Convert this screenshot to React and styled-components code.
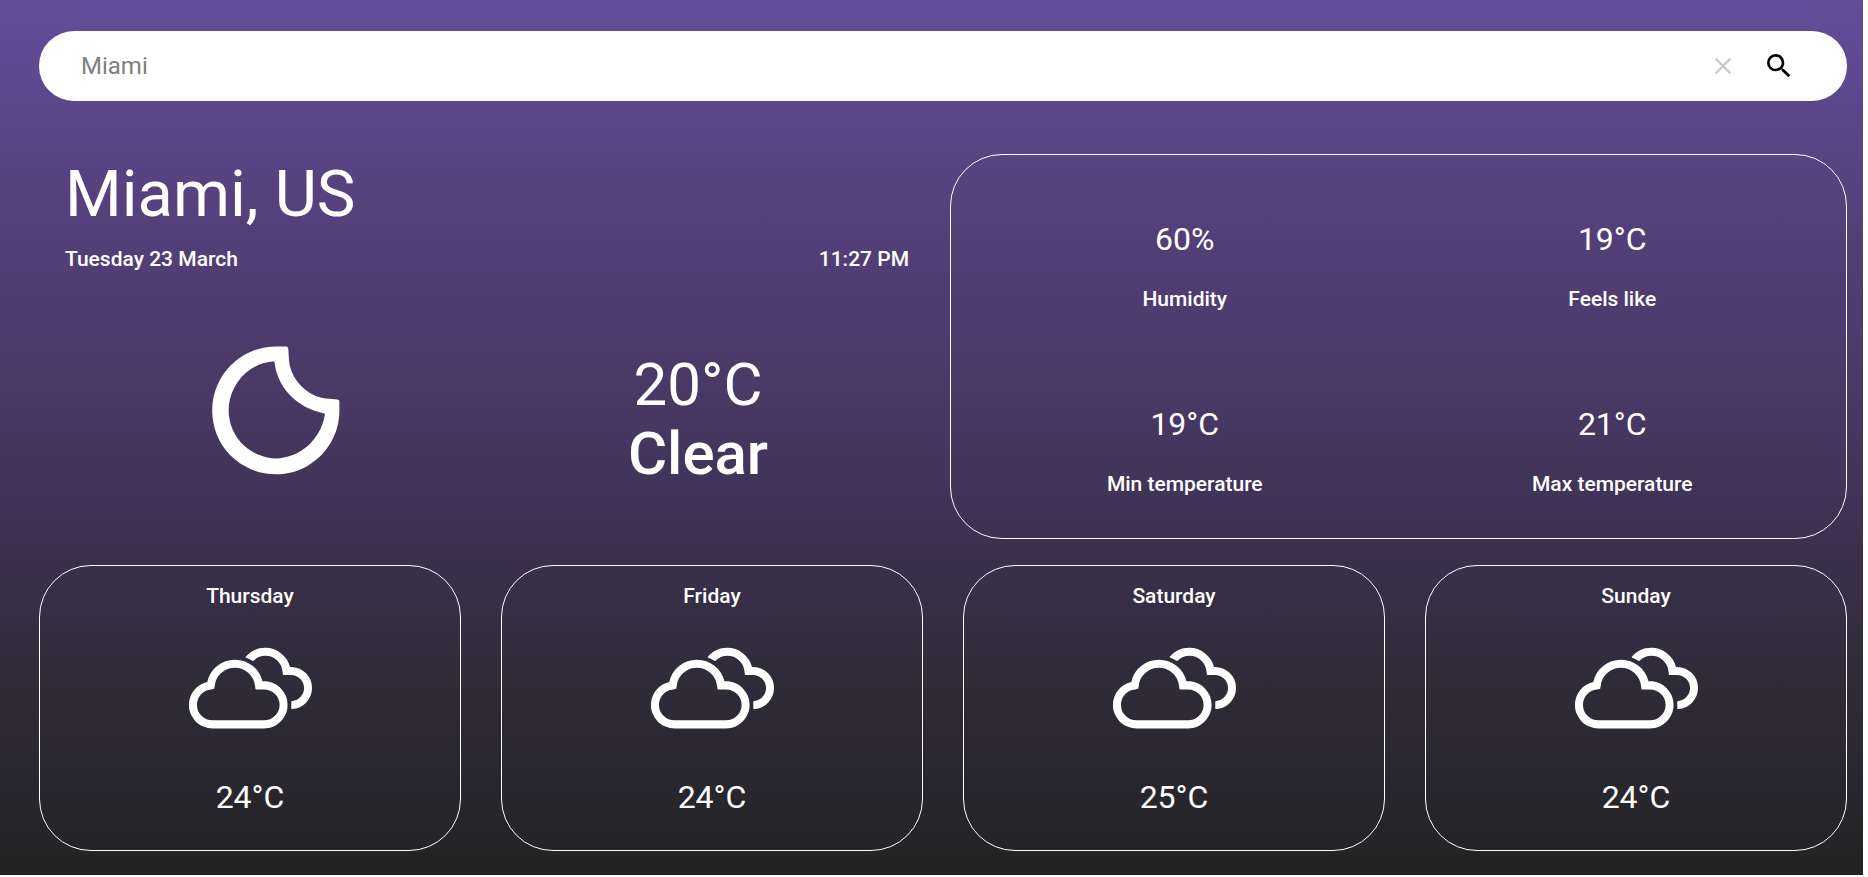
import React, { useState } from "react";
import styled, { createGlobalStyle } from "styled-components";
import { MdClose, MdSearch } from "react-icons/md";
import { WiCloudy, WiNightClear } from "react-icons/wi";

const GlobalStyle = createGlobalStyle`
  *, *::before, *::after { box-sizing: border-box; }
  body { margin: 0; background: #fff; font-family: Roboto, sans-serif; }
  h1, h2, p, dl, dt, dd, ul { margin: 0; padding: 0; font-weight: 400; }
`;

const Page = styled.main`
  display: flex;
  flex-direction: column;
  min-height: calc(100vh - 2px);
  margin: 0 5px 2px 0;
  padding: 31px 16px 24px 39px;
  color: #fff;
  background: linear-gradient(#644d9b, #54407a 25%, #463862 48%, #3a304c 64%, #2f2b39 78%, #232323);
`;

const SearchBar = styled.form`
  display: flex;
  align-items: center;
  height: 70px;
  padding: 0 40px 0 42px;
  border-radius: 35px;
  background: #fff;
`;

const SearchInput = styled.input`
  flex: 1;
  min-width: 0;
  border: 0;
  outline: 0;
  padding: 0;
  background: transparent;
  font: 400 24px Roboto, sans-serif;
  color: #000;
  &::placeholder { color: #808080; opacity: 1; }
`;

const IconButton = styled.button`
  display: flex;
  align-items: center;
  justify-content: center;
  width: 56px;
  height: 48px;
  padding: 0;
  border: 0;
  background: transparent;
  color: ${(p) => p.$color};
  font-size: ${(p) => p.$size}px;
`;

const Overview = styled.div`
  display: grid;
  grid-template-columns: 1fr 1fr;
  gap: 14px;
  margin-top: 53px;
`;

const Current = styled.section`
  display: flex;
  flex-direction: column;
  padding: 0 27px 0 26px;
`;

const City = styled.h1`
  font-size: 65px;
  line-height: 80px;
`;

const DateRow = styled.div`
  display: flex;
  justify-content: space-between;
  margin-top: 13px;
`;

const Label = styled.span`
  display: block;
  font-size: 21px;
  line-height: 24px;
  font-weight: 500;
`;

const Conditions = styled.div`
  display: grid;
  grid-template-columns: 1fr 1fr;
  align-items: center;
  justify-items: center;
  flex: 1;
  padding-top: 20px;
`;

const Reading = styled.div`
  display: flex;
  flex-direction: column;
  align-items: center;
  padding-top: 8px;
  font-size: 60px;
  line-height: 69px;
`;

const Summary = styled.strong`
  font-weight: 500;
`;

const Details = styled.dl`
  display: grid;
  grid-template-columns: 1fr 1fr;
  align-content: start;
  row-gap: 94px;
  min-height: 385px;
  padding: 65px 20px 0;
  border: 1px solid #fff;
  border-radius: 52px;
`;

const Detail = styled.div`
  display: flex;
  flex-direction: column-reverse;
  align-items: center;
  gap: 29px;
`;

const Value = styled.span`
  display: block;
  font-size: 32px;
  line-height: 38px;
`;

const Forecast = styled.ul`
  display: grid;
  grid-template-columns: repeat(4, 1fr);
  gap: 40px;
  margin-top: 26px;
  list-style: none;
`;

const Day = styled.li`
  display: flex;
  flex-direction: column;
  align-items: center;
  min-height: 286px;
  padding: 18px 0 32px;
  border: 1px solid #fff;
  border-radius: 52px;
`;

const CloudIcon = styled(WiCloudy)`
  margin: 16px 0 21px;
`;

const details = [
  ["Humidity", "60%"],
  ["Feels like", "19°C"],
  ["Min temperature", "19°C"],
  ["Max temperature", "21°C"],
];

const days = [
  ["Thursday", "24°C"],
  ["Friday", "24°C"],
  ["Saturday", "25°C"],
  ["Sunday", "24°C"],
];

export default function App() {
  const [query, setQuery] = useState("");
  return (
    <>
      <GlobalStyle />
      <Page>
        <SearchBar role="search" onSubmit={(e) => e.preventDefault()}>
          <SearchInput
            aria-label="City"
            placeholder="Miami"
            value={query}
            onChange={(e) => setQuery(e.target.value)}
          />
          <IconButton type="button" aria-label="Clear search" $color="#ccc" $size={28} onClick={() => setQuery("")}>
            <MdClose />
          </IconButton>
          <IconButton type="submit" aria-label="Search" $color="#000" $size={32}>
            <MdSearch />
          </IconButton>
        </SearchBar>
        <Overview>
          <Current>
            <City>Miami, US</City>
            <DateRow>
              <Label>Tuesday 23 March</Label>
              <Label>11:27 PM</Label>
            </DateRow>
            <Conditions>
              <WiNightClear size={180} viewBox="5 5 20 20" aria-hidden="true" />
              <Reading>
                <span>20°C</span>
                <Summary>Clear</Summary>
              </Reading>
            </Conditions>
          </Current>
          <Details>
            {details.map(([name, value]) => (
              <Detail key={name}>
                <dt><Label>{name}</Label></dt>
                <dd><Value>{value}</Value></dd>
              </Detail>
            ))}
          </Details>
        </Overview>
        <Forecast>
          {days.map(([name, value]) => (
            <Day key={name}>
              <Label as="h2">{name}</Label>
              <CloudIcon size={133} viewBox="3 3 24 24" aria-hidden="true" />
              <Value>{value}</Value>
            </Day>
          ))}
        </Forecast>
      </Page>
    </>
  );
}
